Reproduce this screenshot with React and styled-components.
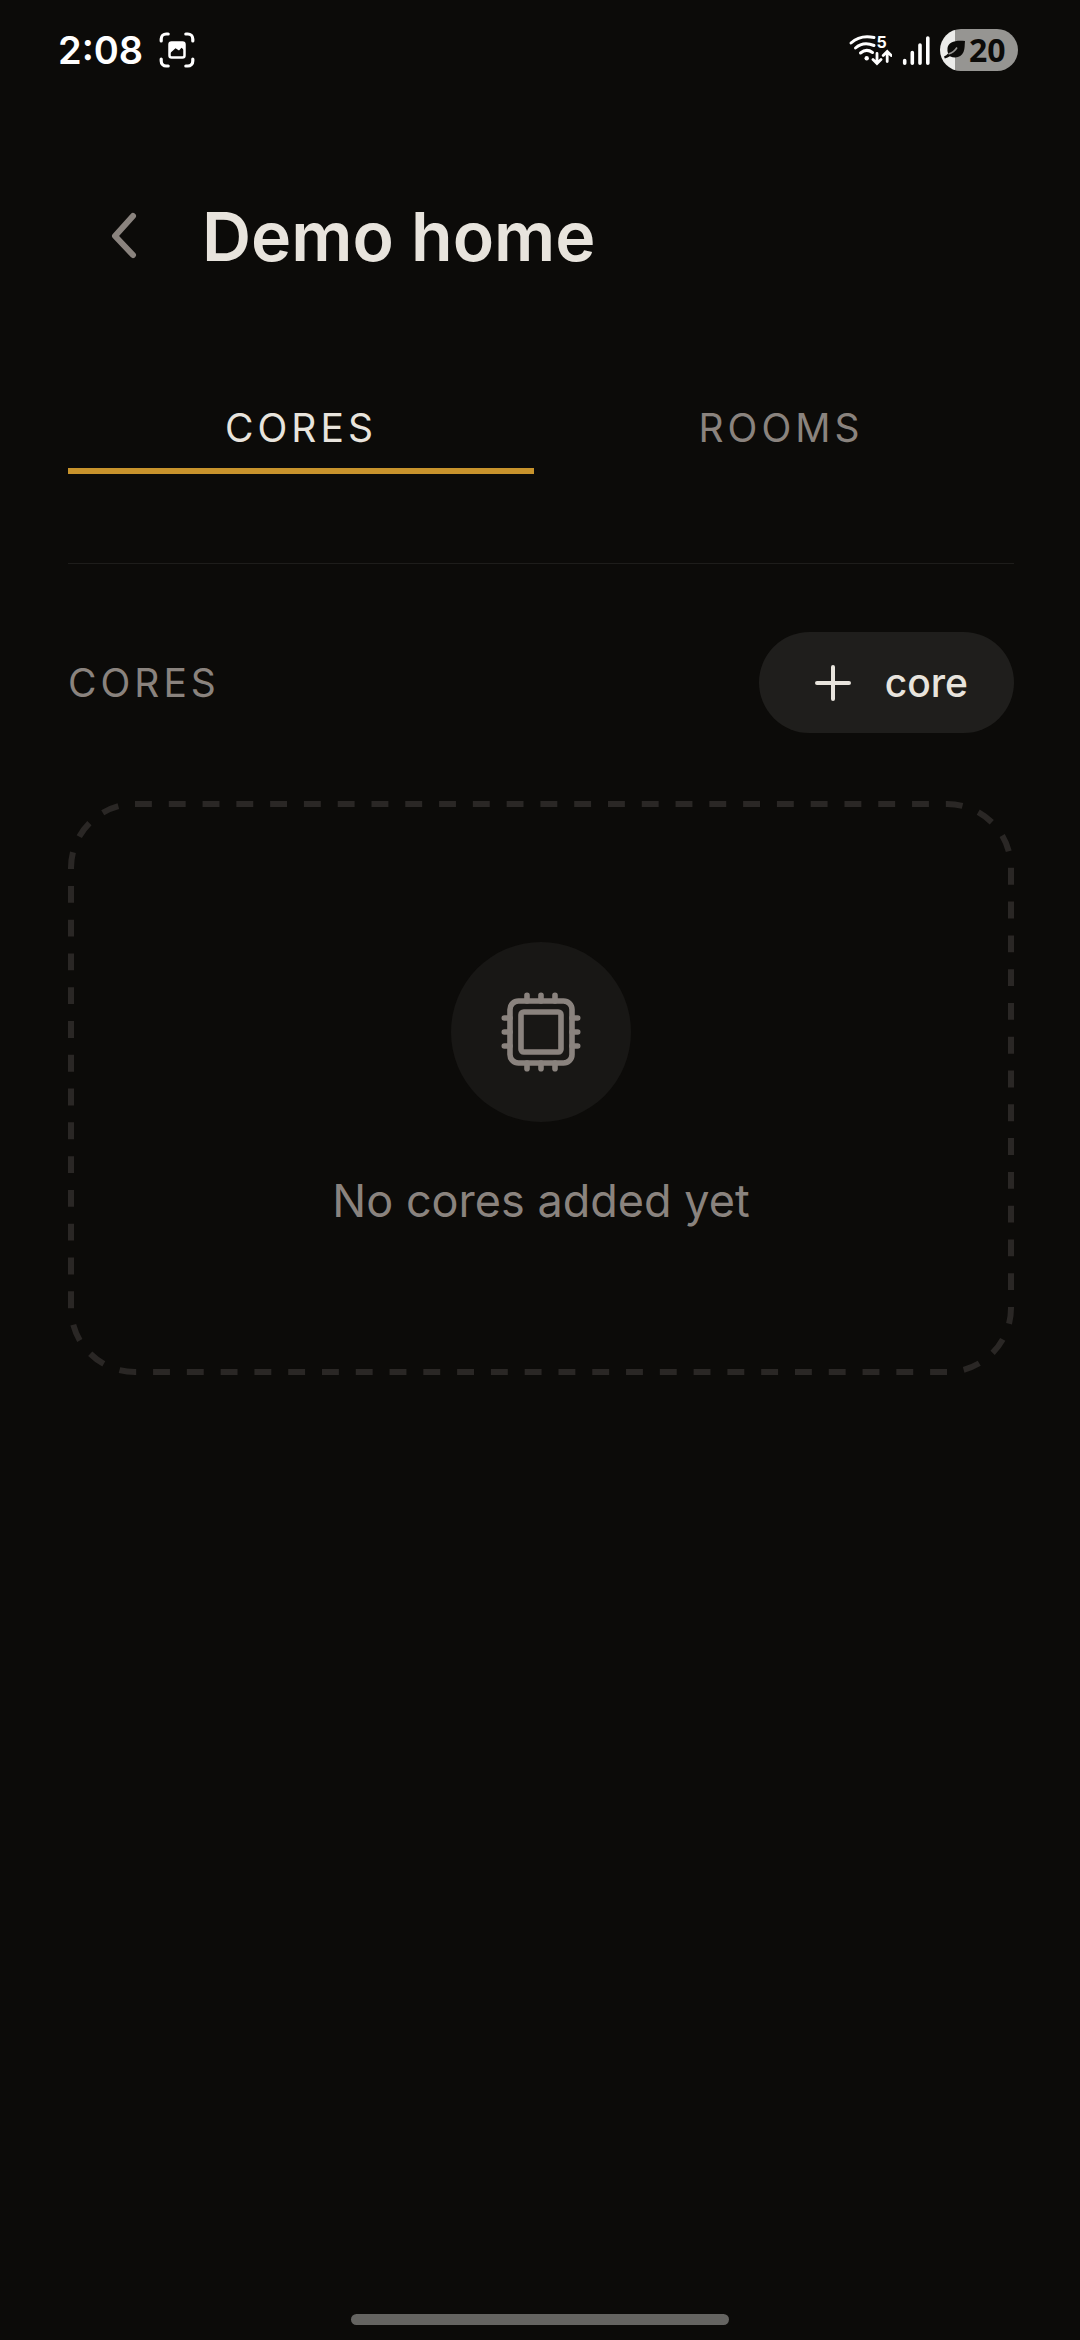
import React, { useState } from 'react';
import styled, { createGlobalStyle, ThemeProvider } from 'styled-components';

const theme = {
  bg: '#0c0b09',
  surface: '#181715',
  button: '#1f1e1c',
  border: '#2a2725',
  divider: '#1e1d1b',
  text: '#e8e4dd',
  muted: '#8a837e',
  accent: '#c8932c',
  font: "Inter, 'Open Sans', sans-serif",
  systemFont: "'Open Sans', 'Noto Sans', sans-serif",
};

const GlobalStyle = createGlobalStyle`
  *, *::before, *::after {
    box-sizing: border-box;
  }
  body {
    margin: 0;
    background: ${theme.bg};
    color: ${theme.text};
    font-family: ${theme.font};
  }
  button {
    margin: 0;
    padding: 0;
    border: 0;
    background: none;
    color: inherit;
    font: inherit;
    cursor: pointer;
  }
  svg {
    display: block;
    flex: none;
  }
`;

const Screen = styled.div`
  display: flex;
  flex-direction: column;
  min-height: 100vh;
`;

const StatusBar = styled.div`
  display: flex;
  align-items: center;
  justify-content: space-between;
  height: 100px;
  padding: 0 62px 0 58px;
  color: #fff;
`;

const StatusGroup = styled.div`
  display: flex;
  align-items: center;
  gap: ${({ $gap }) => $gap}px;
`;

const Clock = styled.span`
  font-size: 38px;
  font-weight: 600;
  line-height: 48px;
`;

const Battery = styled.div`
  display: flex;
  align-items: center;
  gap: 2px;
  width: 78px;
  height: 42px;
  padding-left: 3px;
  border-radius: 21px;
  background: linear-gradient(to right, #ececea 15px, #969592 15px);
  color: ${({ theme }) => theme.bg};
  font-family: ${({ theme }) => theme.systemFont};
  font-size: 32px;
  font-weight: 700;
  line-height: 42px;
`;

const Header = styled.header`
  display: flex;
  align-items: center;
  gap: 34px;
  padding: 80px 68px 0 80px;
`;

const BackButton = styled.button`
  display: grid;
  place-items: center;
  width: 88px;
  height: 112px;
  color: ${({ theme }) => theme.muted};
`;

const Title = styled.h1`
  margin: 0;
  font-size: 68px;
  font-weight: 600;
  line-height: 80px;
`;

const Main = styled.main`
  display: flex;
  flex: 1;
  flex-direction: column;
  padding: 112px 66px 0 68px;
`;

const Tabs = styled.div`
  display: grid;
  grid-template-columns: 1fr 1fr;
  gap: 14px;
  padding-bottom: 89px;
  border-bottom: 1px solid ${({ theme }) => theme.divider};
`;

const Tab = styled.button`
  padding-bottom: 16px;
  border-bottom: 6px solid ${({ $active, theme }) => ($active ? theme.accent : 'transparent')};
  color: ${({ $active, theme }) => ($active ? theme.text : theme.muted)};
  font-size: 39px;
  line-height: 48px;
  letter-spacing: 4px;
  text-transform: uppercase;
`;

const SectionHeader = styled.div`
  display: flex;
  align-items: center;
  justify-content: space-between;
  padding: 68px 0;
`;

const SectionTitle = styled.h2`
  margin: 0;
  color: ${({ theme }) => theme.muted};
  font-size: 39px;
  font-weight: 400;
  line-height: 48px;
  letter-spacing: 4px;
  text-transform: uppercase;
`;

const AddButton = styled.button`
  display: flex;
  align-items: center;
  gap: 32px;
  height: 101px;
  padding: 0 46px 0 54px;
  border-radius: 51px;
  background: ${({ theme }) => theme.button};
  font-size: 39px;
  font-weight: 500;
  line-height: 48px;
`;

const EmptyCard = styled.section`
  position: relative;
  display: flex;
  flex-direction: column;
  align-items: center;
  gap: 48px;
  padding: 141px 40px 143px;
`;

const DashedOutline = styled.svg`
  position: absolute;
  inset: 0;
  width: 100%;
  height: 100%;
  fill: none;
  stroke: ${({ theme }) => theme.border};
  stroke-width: 6px;

  rect {
    width: calc(100% - 6px);
    height: calc(100% - 6px);
  }
`;

const IconCircle = styled.div`
  display: grid;
  place-items: center;
  width: 180px;
  height: 180px;
  border-radius: 50%;
  background: ${({ theme }) => theme.surface};
  color: ${({ theme }) => theme.muted};
`;

const EmptyText = styled.p`
  margin: 0;
  color: ${({ theme }) => theme.muted};
  font-size: 45px;
  line-height: 62px;
`;

const HomeIndicator = styled.div`
  align-self: center;
  width: 35%;
  height: 11px;
  margin-bottom: 15px;
  border-radius: 6px;
  background: #656461;
`;

const CaptureIcon = () => (
  <svg width="36" height="36" viewBox="0 0 36 36" fill="none" stroke="currentColor" strokeWidth="3.2" strokeLinecap="round">
    <path d="M2.2 9V7a5 5 0 0 1 5-5h2M26.8 2h2a5 5 0 0 1 5 5v2M33.8 27v2a5 5 0 0 1-5 5h-2M9.2 34h-2a5 5 0 0 1-5-5v-2" />
    <rect x="10.5" y="10.5" width="15" height="15" rx="2" strokeWidth="2.5" />
    <path d="M11 12q0-2 2-2h10q2 0 2 2v6l-2.5-2.2-2.5 2.8-3.5-2.4-5.5 5z" fill="currentColor" stroke="none" />
  </svg>
);

const WifiIcon = () => (
  <svg width="44" height="40" viewBox="0 -4 44 40" fill="none" stroke="currentColor" strokeWidth="3" strokeLinecap="round">
    <path d="M3 9C9 3.5 17 1.5 26 3.5M7.5 14C12 10 18.5 8.5 26 11.5M12.5 19Q18.5 14 24.5 18.5" />
    <circle cx="18.7" cy="24.3" r="2.2" fill="currentColor" stroke="none" />
    <path d="M29 19.5V29M25 25.5l4 4 4-4M39.2 27.5V18M35.2 21.5l4-4 4 4" strokeWidth="2.8" />
    <text x="28.5" y="14" fill="currentColor" stroke="none" fontSize="16" fontWeight="700">5</text>
  </svg>
);

const SignalIcon = () => (
  <svg width="30" height="32" viewBox="0 0 30 32" stroke="currentColor" strokeWidth="3.6" strokeLinecap="round">
    <path d="M3.7 26.5v2.8M11.3 18.5v10.8M19 11v18.3M26.8 4v25.3" />
  </svg>
);

const LeafIcon = () => (
  <svg width="24" height="22" viewBox="0 0 24 22">
    <path
      d="M22 2C12 1 5.5 3 4.5 9q-.4 3 .6 5.5Q3.5 16.5 1 17.5l.8 2q3-.8 5-2.3c6 2.8 11.7.8 13.7-4.2C22 9.5 21.5 6 22 2Z"
      fill="currentColor"
    />
    <path d="M5.5 15Q11 13.5 14 8.5" fill="none" stroke="#969592" strokeWidth="1.6" />
  </svg>
);

const ChevronIcon = () => (
  <svg width="28" height="48" viewBox="0 0 28 48" fill="none" stroke="currentColor" strokeWidth="6" strokeLinecap="round" strokeLinejoin="round">
    <path d="M23 4 5 24l18 19" />
  </svg>
);

const PlusIcon = () => (
  <svg width="40" height="40" viewBox="0 0 40 40" stroke="currentColor" strokeWidth="4" strokeLinecap="round">
    <path d="M20 4v32M4 20h32" />
  </svg>
);

const ChipIcon = () => (
  <svg width="84" height="84" viewBox="0 0 84 84" fill="none" stroke="currentColor" strokeWidth="5.6" strokeLinecap="round">
    <rect x="11" y="11" width="62" height="62" rx="8.5" />
    <rect x="22" y="22" width="40" height="40" rx="2.8" />
    <path d="M28 5.3V11M42 5.3V11M56 5.3V11M28 73v5.7M42 73v5.7M56 73v5.7M5.3 28H11M5.3 42H11M5.3 56H11M73 28h5.7M73 42h5.7M73 56h5.7" />
  </svg>
);

const tabs = ['Cores', 'Rooms'];

const App = () => {
  const [active, setActive] = useState('Cores');

  return (
    <ThemeProvider theme={theme}>
      <GlobalStyle />
      <Screen>
        <StatusBar>
          <StatusGroup $gap={16}>
            <Clock>2:08</Clock>
            <CaptureIcon />
          </StatusGroup>
          <StatusGroup $gap={9}>
            <WifiIcon />
            <SignalIcon />
            <Battery>
              <LeafIcon />
              20
            </Battery>
          </StatusGroup>
        </StatusBar>
        <Header>
          <BackButton type="button" aria-label="Back">
            <ChevronIcon />
          </BackButton>
          <Title>Demo home</Title>
        </Header>
        <Main>
          <Tabs role="tablist">
            {tabs.map((tab) => (
              <Tab
                key={tab}
                type="button"
                role="tab"
                aria-selected={tab === active}
                $active={tab === active}
                onClick={() => setActive(tab)}
              >
                {tab}
              </Tab>
            ))}
          </Tabs>
          <SectionHeader>
            <SectionTitle>Cores</SectionTitle>
            <AddButton type="button">
              <PlusIcon />
              core
            </AddButton>
          </SectionHeader>
          <EmptyCard>
            <DashedOutline aria-hidden="true">
              <rect x="3" y="3" rx="64" pathLength="172" strokeDasharray="1" />
            </DashedOutline>
            <IconCircle>
              <ChipIcon />
            </IconCircle>
            <EmptyText>No cores added yet</EmptyText>
          </EmptyCard>
        </Main>
        <HomeIndicator />
      </Screen>
    </ThemeProvider>
  );
};

export default App;
